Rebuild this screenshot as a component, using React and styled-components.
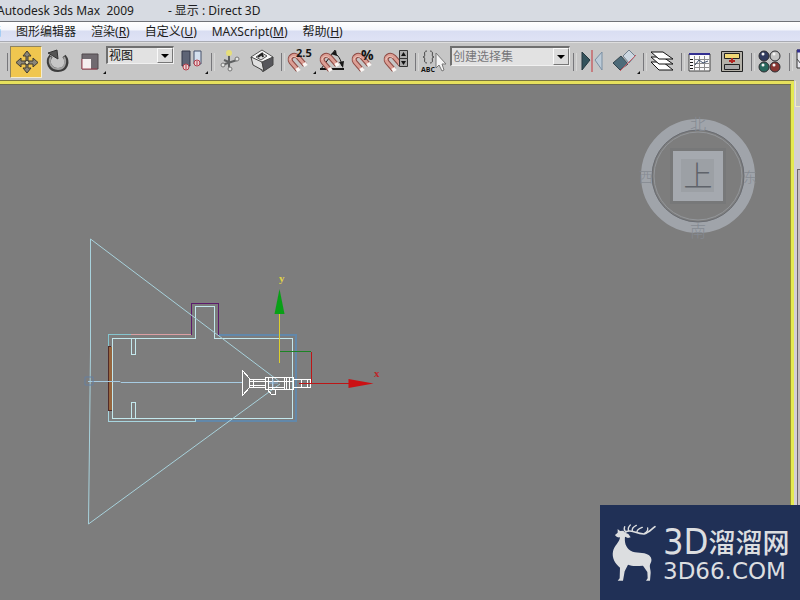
import React, { useState } from "react";
import styled, { createGlobalStyle } from "styled-components";

const GlobalStyle = createGlobalStyle`
  * {
    box-sizing: border-box;
  }

  body {
    margin: 0;
    overflow: hidden;
    font-family: "Noto Sans", "Noto Sans CJK SC", sans-serif;
    font-size: 12px;
    color: #1c1c20;
  }
`;

const Window = styled.div`
  position: relative;
  height: 100vh;
  display: flex;
  flex-direction: column;
  background-color: #c6c6c6;
  overflow: hidden;
`;

const TitleBar = styled.header`
  height: 21px;
  flex: none;
  display: flex;
  gap: 34px;
  margin-left: -3px;
  line-height: 21px;
  white-space: pre;
  background-color: #d7dbe2;
`;

const MenuBar = styled.nav`
  height: 21px;
  flex: none;
  display: flex;
  gap: 15px;
  border-top: 1px solid #6f7278;
  border-bottom: 1px solid #a9abb3;
  background: linear-gradient(#fff 0, #f4f6fc 8px, #d9def2 9px, #dfe3f5 100%);
`;

const MenuItem = styled.button`
  padding: 0;
  border: 0;
  background: none;
  font: inherit;
  color: inherit;
  line-height: 19px;
  white-space: nowrap;

  &:first-child {
    width: 1px;
    overflow: hidden;
    direction: rtl;
  }
`;

const ToolBar = styled.div`
  height: 39px;
  flex: none;
  display: flex;
  padding: 3px 0 0 4px;
  border-top: 1px solid #dedede;
  background-color: #c6c6c6;
  overflow: hidden;
`;

const Tool = styled.button`
  width: 32px;
  height: 32px;
  flex: none;
  padding: 0;
  border: 1px solid ${({ $active }) => ($active ? "#8f8460" : "transparent")};
  border-right-color: ${({ $active }) => ($active ? "#f4ecd0" : "transparent")};
  border-bottom-color: ${({ $active }) => ($active ? "#f4ecd0" : "transparent")};
  background-color: ${({ $active }) => ($active ? "#f0c64f" : "transparent")};

  svg {
    display: block;
    overflow: visible;
  }
`;

const Separator = styled.div`
  width: 6px;
  height: 18px;
  flex: none;
  margin-top: 7px;
  padding-left: 3px;

  &::before {
    content: "";
    display: block;
    width: 2px;
    height: 100%;
    border-left: 1px solid #77777b;
    border-right: 1px solid #d6d6d6;
  }
`;

const SelectBox = styled.label`
  width: ${({ $wide }) => ($wide ? "120px" : "68px")};
  height: ${({ $wide }) => ($wide ? "20px" : "18px")};
  flex: none;
  display: flex;
  margin-right: ${({ $wide }) => ($wide ? "0" : "2px")};
  border: 1px solid #f0f0f0;
  border-top: 2px solid #6f6f6f;
  border-left: 2px solid #6f6f6f;
  background-color: #e2e2e2;
`;

const Select = styled.select`
  flex: 1;
  min-width: 0;
  padding: 0 0 0 1px;
  border: 0;
  appearance: none;
  background: none;
  font: inherit;
  line-height: 15px;
  color: ${({ $muted }) => ($muted ? "#77777a" : "#111")};
`;

const Arrow = styled.span`
  width: 16px;
  flex: none;
  display: grid;
  place-items: center;
  border: 1px solid #fafafa;
  border-right-color: #777;
  border-bottom-color: #777;
  background-color: #dcdcdc;

  &::before {
    content: "";
    border: 4px solid transparent;
    border-top-color: #000;
    border-bottom: 0;
  }
`;

const Main = styled.main`
  flex: 1;
  min-height: 0;
  display: flex;
`;

const Viewport = styled.section`
  position: relative;
  flex: 1;
  min-width: 0;
  border-top: 3px solid #e6e05c;
  border-right: 3px solid #e4ea50;
  background-color: #7d7d7d;
  box-shadow: inset 0 1px #6c6a52, inset -1px 0 #98932e, 0 -1px #7c7840;
`;

const Scene = styled.svg`
  display: block;
  width: 100%;
  height: 100%;
`;

const Compass = styled.svg`
  position: absolute;
  top: 32px;
  right: 33px;
  overflow: visible;
`;

const SidePanel = styled.aside`
  width: 6px;
  flex: none;
  display: flex;
  flex-direction: column;
  padding-left: 1px;
  background-color: #d4cfd4;
`;

const PanelTab = styled.div`
  height: 26px;
  border-left: 1px solid #eee9c8;
  border-bottom: 1px solid #eee9c8;
  background-color: #c8c6c6;
`;

const PanelBody = styled.div`
  flex: 1;
  margin: 62px 0 0 2px;
  border-top: 1px solid #6e666c;
  border-left: 1px solid #6e666c;
  background-color: #c9bfc2;
`;

const Brand = styled.div`
  position: absolute;
  right: 0;
  bottom: 0;
  width: 200px;
  height: 95px;
  display: flex;
  gap: 5px;
  padding: 19px 8px 0 10px;
  background-color: #203056;
  color: #dcdee0;
`;

const BrandText = styled.div`
  display: flex;
  flex-direction: column;
  white-space: nowrap;
`;

const BrandName = styled.div`
  display: flex;
  align-items: center;
  height: 36px;
  font: 500 27px/36px "Noto Sans CJK SC", sans-serif;
`;

const BrandNumber = styled.span`
  font: 36px/36px "DejaVu Sans Condensed", "DejaVu Sans", sans-serif;
`;

const BrandSite = styled.div`
  font: 23px/22px "DejaVu Sans", sans-serif;
`;

const Flyout = () => <path d="M31 24v3h-3z" fill="#111" />;

const MoveIcon = () => (
  <g stroke="#3f3a30" fill="#8b8678">
    <path d="M16 4l4 5h-3v5h5v-3l5 4.500-5 4.500v-3h-5v4h3l-4 5-4-5h3v-4h-5v3l-5-4.500L10 11v3h5V9h-3z" />
    <circle cx="16" cy="15.500" r="2" fill="#eee4b2" />
  </g>
);

const RotateIcon = () => (
  <g fill="none">
    <path d="M8 9C3 15 7 23 15 23c8 0 11-8 6-14" stroke="#3c3c3c" strokeWidth="4" />
    <path d="M8 10C5 15 8 22 15 22c6 0 9-6 6-12" stroke="#a2a2a2" strokeWidth="2" />
    <path d="M5 6l9-3 1 9z" fill="#555" stroke="#333" />
  </g>
);

const ScaleIcon = () => (
  <>
    <path d="M7 7h16v15H7z" fill="#706a70" stroke="#50484c" />
    <path d="M7 12h9v10H7z" fill="#f5eff0" />
    <path d="M7 12v10h15" stroke="#a34756" />
    <Flyout />
  </>
);

const PivotIcon = () => (
  <>
    <path d="M5 4h8v15H5z" fill="#5d6375" stroke="#35394a" />
    <path d="M17 4h7v13h-7z" fill="#d5e0ee" stroke="#44516b" />
    <circle cx="9" cy="20" r="3" fill="#edd2d4" stroke="#b23c4a" />
    <circle cx="20" cy="16" r="3" fill="#edd2d4" stroke="#b23c4a" />
    <path d="M9 18v4M20 14v4" stroke="#b23c4a" />
    <Flyout />
  </>
);

const ManipulateIcon = () => (
  <>
    <path d="M14 7v15M7 18l15-5M14 15l-5-2" stroke="#5e6061" strokeWidth="2" />
    <circle cx="14" cy="6" r="3" fill="#e6de7a" />
    <circle cx="8" cy="18" r="2" fill="#e4e6e4" stroke="#777" />
    <circle cx="22" cy="12" r="2" fill="#e4e6e4" stroke="#777" />
    <circle cx="15" cy="22" r="2" fill="#e4e6e4" stroke="#777" />
  </>
);

const KeyboardIcon = () => (
  <>
    <path d="M4 10L15 3l11 7-10 15z" fill="#f7f7f7" stroke="#555" />
    <path d="M4 10l11 5 2 9L6 18z" fill="#e0e0e0" stroke="#444" />
    <path d="M26 10l-11 5 2 9 9-6z" fill="#56565b" stroke="#444" />
    <path d="M9 10l6-4 5 3-6 4z" fill="#ddd" stroke="#555" />
    <path d="M11 10l4-3 1 3" stroke="#222" strokeWidth="2" />
  </>
);

const Magnet = () => (
  <g fill="none">
    <path d="M13 23l-7-8c-3-5 3-9 7-5l7 8" stroke="#8d4a44" strokeWidth="5" />
    <path d="M13 23l-7-8c-3-5 3-9 7-5l7 8" stroke="#dc9f95" strokeWidth="3" />
    <path d="M5 13c0-3 4-5 7-2" stroke="#f0cabf" />
    <path d="M14 24l-2-3M21 19l-2-3" stroke="#faf6f4" strokeWidth="4" />
  </g>
);

const IconText = styled.text`
  font: bold ${({ $size }) => $size}px "Open Sans", sans-serif;
  fill: #151515;
`;

const SnapIcon = () => (
  <>
    <Magnet />
    <IconText x="11" y="10" $size={11}>2.5</IconText>
    <Flyout />
  </>
);

const AngleIcon = () => (
  <>
    <path d="M3 22h24" stroke="#161616" strokeWidth="2" />
    <path d="M4 22L18 3" stroke="#161616" />
    <Magnet />
    <path d="M17 6c4 2 7 6 8 13" fill="none" stroke="#161616" />
    <path d="M14 7l5-4 1 6zM22 15l5-1-1 7z" fill="#161616" />
  </>
);

const PercentIcon = () => (
  <>
    <Magnet />
    <IconText x="12" y="13" $size={14}>%</IconText>
  </>
);

const SpinnerIcon = () => (
  <>
    <Magnet />
    <path d="M18.500 3.500h8v8h-8zM18.500 11.500h8v8h-8z" fill="#aaa" stroke="#333" />
    <path d="M20 9l2.500-4L25 9zM20 14h5l-2.500 4z" fill="#111" />
  </>
);

const NamedSetIcon = () => (
  <>
    <path d="M8 4c-5 0 0 6-4 6 4 0-1 6 4 6M11 4c5 0 0 6 4 6-4 0 1 6-4 6" fill="none" stroke="#4a4a4a" />
    <IconText x="2" y="25" $size={7}>ABC</IconText>
    <path d="M17 6v15l3-3 3 6 2-1-2-6h4z" fill="#f4f4f4" stroke="#777" />
  </>
);

const MirrorIcon = () => (
  <>
    <path d="M5 5l8 8-8 10z" fill="#34535c" stroke="#263940" />
    <path d="M25 5l-7 8 7 10z" fill="#bccbd8" stroke="#7a8fa3" />
    <path d="M15 3v22" stroke="#c67d80" strokeWidth="2" />
  </>
);

const AlignIcon = () => (
  <>
    <path d="M14 9l6-6 6 6-6 7z" fill="#ccd7e1" stroke="#71808d" />
    <path d="M4 16l8-7 7 8-8 6z" fill="#4d6b79" stroke="#33444d" />
    <path d="M11 24L27 8" stroke="#c45963" />
    <Flyout />
  </>
);

const LayersIcon = () => (
  <g fill="#fff" stroke="#111">
    <path d="M4 15h12l10 8H12z" />
    <path d="M4 10h12l10 7H12z" />
    <path d="M4 5h12l10 7H12z" />
  </g>
);

const CurveIcon = () => (
  <>
    <path d="M4 7h21v17H4z" fill="#fafafa" stroke="#444" />
    <path d="M4 7h21" stroke="#332f91" strokeWidth="2" />
    <path d="M9.500 9v15M9 12.500h15M9 16.500h15M9 20.500h15M14.500 9v15M19.500 9v15" stroke="#8c8c8c" />
    <path d="M5 12.500h3M5 15.500h3M5 18.500h3M5 21.500h3" stroke="#111" />
    <path d="M10 18l4-5 4 3 5-2" fill="none" stroke="#3d506c" />
  </>
);

const SchematicIcon = () => (
  <>
    <path d="M4.500 4.500h21v20h-21z" fill="#b5b2a9" stroke="#222" />
    <path d="M7.500 6.500h15v5h-15z" fill="#f0d876" stroke="#222" />
    <path d="M7.500 17.500h15v5h-15z" fill="#aaa" stroke="#222" />
    <path d="M15 11v5M12 14h6" stroke="#b22623" strokeWidth="2" />
  </>
);

const balls = [
  [9, 9, "#313b5e"],
  [20, 9, "#c4c4c4"],
  [9, 20, "#28675c"],
  [20, 20, "#873733"],
];

const MaterialIcon = () => (
  <>
    {balls.map(([x, y, color]) => (
      <g key={color}>
        <circle cx={x} cy={y} r="5" fill={color} stroke="#2c2c30" />
        <circle cx={x - 1} cy={y - 2} r="1.500" fill="#f4f4f4" />
      </g>
    ))}
  </>
);

const RenderIcon = () => (
  <>
    <path d="M4 3h18v18H4z" fill="#e8e8ee" stroke="#333" />
    <path d="M4 4h18" stroke="#332f91" strokeWidth="3" />
    <path d="M4 12l4 5 3-4" fill="none" stroke="#444" />
  </>
);

const tools = [
  { type: "sep" },
  { name: "选择并移动", icon: MoveIcon },
  { name: "选择并旋转", icon: RotateIcon },
  { name: "选择并缩放", icon: ScaleIcon },
  { type: "select", name: "参考坐标系", value: "视图" },
  { name: "使用轴点中心", icon: PivotIcon },
  { type: "sep" },
  { name: "选择并操纵", icon: ManipulateIcon },
  { name: "键盘快捷键覆盖", icon: KeyboardIcon },
  { type: "sep" },
  { name: "捕捉开关", icon: SnapIcon },
  { name: "角度捕捉", icon: AngleIcon },
  { name: "百分比捕捉", icon: PercentIcon },
  { name: "微调器捕捉", icon: SpinnerIcon },
  { type: "sep" },
  { name: "编辑命名选择集", icon: NamedSetIcon },
  { type: "select", name: "命名选择集", value: "创建选择集", wide: true },
  { type: "sep" },
  { name: "镜像", icon: MirrorIcon },
  { name: "对齐", icon: AlignIcon },
  { type: "sep" },
  { name: "层管理器", icon: LayersIcon },
  { type: "sep" },
  { name: "曲线编辑器", icon: CurveIcon },
  { name: "图解视图", icon: SchematicIcon },
  { type: "sep" },
  { name: "材质编辑器", icon: MaterialIcon },
  { type: "sep" },
  { name: "渲染设置", icon: RenderIcon },
];

const menus = [
  { label: "动画" },
  { label: "图形编辑器" },
  { label: "渲染", hotkey: "R" },
  { label: "自定义", hotkey: "U" },
  { label: "MAXScript", hotkey: "M" },
  { label: "帮助", hotkey: "H" },
];

const AxisText = styled.text`
  font: bold 11px "Liberation Serif", serif;
  fill: ${({ $color }) => $color};
`;

const Drawing = () => (
  <Scene aria-label="顶视图">
    <g fill="none" shapeRendering="crispEdges">
      {/* walls */}
      <path d="M108.500 263V250.500H131" stroke="#85c6cf" />
      <path d="M131 250.500h61" stroke="#dba0a4" />
      <path d="M191.500 251V219.500h27V251" stroke="#5c1a6c" />
      <path d="M219 251h77v86H196" stroke="#6288aa" strokeWidth="2" />
      <path d="M108.500 327v10.500h87v-3" stroke="#a7d5df" />
      <path d="M110.500 263v63" stroke="#96663f" strokeWidth="3" />
      <path d="M111 262.500h-2.500v64h3" stroke="#512a27" />
      <path d="M112.500 254.500h83v-32h19v32h78v80h-180z" stroke="#c3e8ed" />
      <path d="M131.500 254v16h4v-16M131.500 334v-16h4v16" stroke="#c3e8ed" />
    </g>
    <g fill="none">
      {/* camera cone */}
      <path d="M280 298L90.500 155v111l-1 90-1 84L280 300" stroke="#a8d2dc" />
      <path d="M88 297.500h32l1 1h122" stroke="#a6cbe2" />
      <path d="M85 293h8v8h-8z" stroke="#6780a0" />
      {/* camera */}
      <g stroke="#fff" shapeRendering="crispEdges">
        <path d="M242.500 286.500v25l7-8v-9zM249 295.500h17M249 303.500h17M249 297.500h17M249 301.500h17M249.500 295v8M253.500 295v8M265.500 293.500h28v12h-28zM268.500 293v12M272.500 293v12M284.500 293v12M286.500 293v12M289.500 293v12M293.500 295.500h17v8h-17zM301.500 295v8M307.500 295v8" />
        <path d="M265 297.500h28M268 303.500h17M268 306l3 4h4v-4" />
      </g>
      <path d="M273 295v8M269 299h9" stroke="#88b6da" />
      {/* gizmo */}
      <g shapeRendering="crispEdges">
        <path d="M279.500 230v49" stroke="#dccf2c" />
        <path d="M280 267.500h31" stroke="#1c8424" />
        <path d="M311.500 268v31" stroke="#bc1616" />
        <path d="M299 299.500h50" stroke="#bc1616" />
      </g>
    </g>
    <path d="M274.500 230l5-25 5 25z" fill="#08a016" />
    <path d="M348.500 295l25 4.500-25 4.500z" fill="#cb1013" />
    <AxisText x="279" y="198" $color="#e0d345">y</AxisText>
    <AxisText x="374" y="293" $color="#bd2528">x</AxisText>
  </Scene>
);

const CompassText = styled.text`
  font: 300 ${({ $size }) => $size}px "Noto Sans CJK SC", sans-serif;
  text-anchor: middle;
  fill: ${({ $size }) => ($size > 20 ? "#5f636a" : "#858a92")};
`;

const ViewCompass = () => (
  <Compass width="120" height="120" viewBox="0 0 120 120" aria-label="上">
    <circle cx="60" cy="60" r="51.500" fill="none" stroke="#a0a4aa" strokeWidth="11" />
    <circle cx="60" cy="60" r="46" fill="none" stroke="#696c72" strokeWidth="1" />
    <circle cx="60" cy="60" r="44" fill="none" stroke="#94979b" strokeWidth="1" />
    <path d="M32 32h56v56H32z" fill="#727376" opacity=".5" />
    <path d="M35 35h50v50H35z" fill="#a5a9af" />
    <path d="M43 43h33v33H43z" fill="#9ca0a5" />
    <CompassText x="60" y="71" $size={29}>上</CompassText>
    <CompassText x="60" y="14" $size={16}>北</CompassText>
    <CompassText x="8" y="66" $size={14}>西</CompassText>
    <CompassText x="112" y="66" $size={14}>东</CompassText>
    <CompassText x="60" y="121" $size={16}>南</CompassText>
  </Compass>
);

const Deer = () => (
  <svg width="48" height="60" viewBox="30 58 144 180" aria-hidden="true">
    <path
      d="M45 91l8-7 0-11 7 6 10-1 6 6 9 4 7 10-8 2-9-4c-2 17 2 32 17 42 16 10 38 2 54 13 8 6 11 15 6 24-6 11 1 19 0 30l-2 23h-12l5-7-1-19-13-19c-15 0-31 3-45-3l-10 20-5 28H53l6-7 1-32c-15-12-25-29-21-49 4-18 20-27 21-42-6 1-12-1-15-7z"
      fill="currentColor"
    />
    <g fill="none" stroke="currentColor" strokeWidth="5" strokeLinecap="round">
      <path d="M77 82c14-10 27 4 55 6 14-3 22-14 33-22" />
      <path d="M76 80c-4-4-4-9-2-14M86 78c-3-6 0-12 5-17M97 78c-2-7 4-12 12-16M111 82c-1-7 9-11 16-14M134 86c6-3 10-9 9-16" strokeWidth="4" />
    </g>
  </svg>
);

export default function App() {
  const [active, setActive] = useState("选择并移动");

  return (
    <Window>
      <GlobalStyle />
      <TitleBar>
        <span>Autodesk 3ds Max  2009</span>
        <span>- 显示 : Direct 3D</span>
      </TitleBar>
      <MenuBar>
        {menus.map((e) => (
          <MenuItem key={e.label}>
            {e.label}
            {e.hotkey && (
              <>
                (<u>{e.hotkey}</u>)
              </>
            )}
          </MenuItem>
        ))}
      </MenuBar>
      <ToolBar>
        {tools.map((e, idx) => {
          if (e.type === "sep") return <Separator key={idx} />;
          if (e.type === "select")
            return (
              <SelectBox key={idx} $wide={e.wide}>
                <Select aria-label={e.name} $muted={e.wide}>
                  <option>{e.value}</option>
                </Select>
                <Arrow />
              </SelectBox>
            );
          const Icon = e.icon;
          return (
            <Tool
              key={idx}
              aria-label={e.name}
              $active={active === e.name}
              onClick={() => setActive(e.name)}
            >
              <svg width="30" height="30" viewBox="0 0 30 30" fill="none">
                <Icon />
              </svg>
            </Tool>
          );
        })}
      </ToolBar>
      <Main>
        <Viewport>
          <Drawing />
          <ViewCompass />
        </Viewport>
        <SidePanel>
          <PanelTab />
          <PanelBody />
        </SidePanel>
      </Main>
      <Brand>
        <Deer />
        <BrandText>
          <BrandName>
            <BrandNumber>3D</BrandNumber>溜溜网
          </BrandName>
          <BrandSite>3D66.COM</BrandSite>
        </BrandText>
      </Brand>
    </Window>
  );
}
